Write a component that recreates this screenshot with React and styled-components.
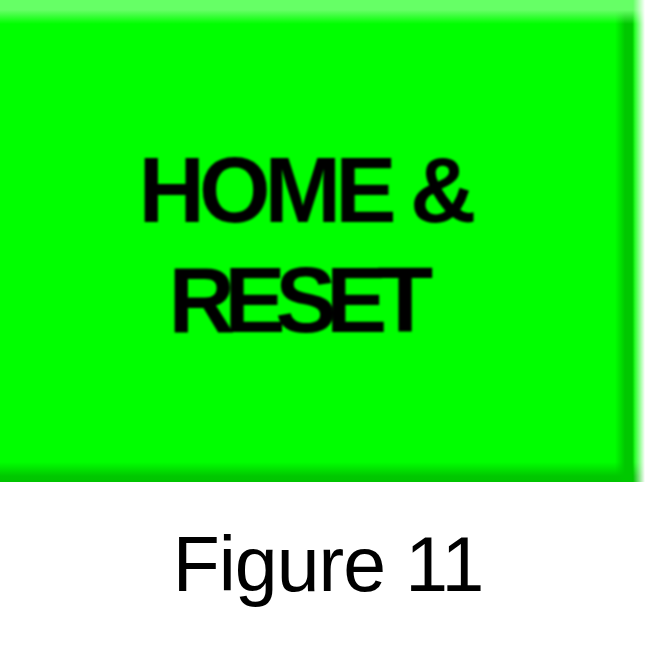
import React from "react";
import styled, { createGlobalStyle } from "styled-components";

const Global = createGlobalStyle`
  html, body { margin: 0; padding: 0; background: #ffffff; }
  body { width: 656px; height: 663px; overflow: hidden; }
`;

const Page = styled.div`
  width: 656px;
  height: 663px;
  display: flex;
  flex-direction: column;
  background: #ffffff;
`;

const Button = styled.div`
  width: 645px;
  height: 482px;
  box-sizing: border-box;
  padding-top: 135px;
  padding-right: 36px;
  display: flex;
  flex-direction: column;
  align-items: center;
  background:
    linear-gradient(to left, #ffffff 0, rgba(255, 255, 255, 0) 12px),
    linear-gradient(to bottom, #66ff66 0, #66ff66 10px, rgba(102, 255, 102, 0) 24px),
    linear-gradient(to left, rgba(0, 200, 0, 0) 0, rgba(0, 200, 0, 0) 10px, #00c800 13px, #00c800 20px, rgba(0, 200, 0, 0) 30px),
    linear-gradient(to top, #00c400 0, #00c800 6px, rgba(0, 200, 0, 0) 20px),
    #00ff00;
`;

const Label = styled.div`
  font-family: "Liberation Sans", Arial, sans-serif;
  font-weight: 700;
  font-size: 92px;
  line-height: 110px;
  letter-spacing: ${(p) => p.$spacing}px;
  margin-right: ${(p) => p.$shift || 0}px;
  color: #000000;
  white-space: nowrap;
  filter: blur(1.2px);
`;

const Caption = styled.div`
  margin-top: 44px;
  text-align: center;
  font-family: "Liberation Sans", Arial, sans-serif;
  font-size: 77px;
  line-height: 76px;
  letter-spacing: -1px;
  color: #000000;
`;

export default function App() {
  return (
    <Page>
      <Global />
      <Button>
        <Label $spacing={-6}>HOME &amp;</Label>
        <Label $spacing={-10.5} $shift={18}>RESET</Label>
      </Button>
      <Caption>Figure 11</Caption>
    </Page>
  );
}
